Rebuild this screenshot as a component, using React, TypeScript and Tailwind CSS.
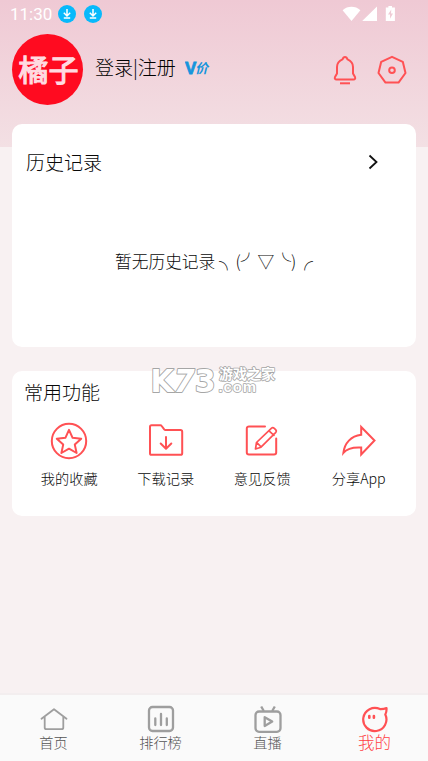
import React from 'react';

interface IconItem {
  label: string;
  icon: React.ReactNode;
}

const DownloadDot: React.FC = () => (
  <svg width="18" height="18" viewBox="0 0 18 18" fill="none">
    <circle cx="9" cy="9" r="9" fill="#08b9fb" />
    <path d="M9 4v6.5M5.8 7.8 9 11l3.2-3.2M5.8 13h6.4" stroke="#fff" strokeWidth="1.5" />
  </svg>
);

const StatusIcons: React.FC = () => (
  <svg width="54" height="16" viewBox="0 0 54 16" fill="#fff">
    <path d="M.6 4.2C5.6-.3 13.4-.3 18.4 4.2L9.5 15z" />
    <path d="M35 .5V15H20.2z" />
    <path
      fillRule="evenodd"
      d="M43.8 1.400h2.600V0h3.600v1.400h2.900V15h-9.100zM49.300 3.400l-3.300 5.200h2v4.200l3-5.400h-2z"
    />
  </svg>
);

const BellIcon: React.FC = () => (
  <svg width="24" height="30" viewBox="0 0 24 30" fill="none" stroke="#ff5154" strokeWidth="2" strokeLinejoin="round">
    <path d="M12 2c-1.300 0-2 .9-2.500 2.400C5.700 6 4 8.600 4 12v6.500L2 22c-.6 1.500 0 2.500 1.500 2.500h17c1.500 0 2.100-1 1.500-2.500l-2-3.500V12c0-3.400-1.700-6-5.500-7.600C14 2.900 13.300 2 12 2z" />
    <path d="M7 28.300h10" />
  </svg>
);

const SettingsIcon: React.FC = () => (
  <svg width="30" height="30" viewBox="0 0 30 30" fill="none" stroke="#ff5154" strokeWidth="2" strokeLinejoin="round">
    <path d="M15 1.800 25.800 6.800 28.500 18 21.500 27.600H8.500L1.500 18 4.200 6.800z" />
    <circle cx="15" cy="15.300" r="2.800" />
  </svg>
);

const features: IconItem[] = [
  {
    label: '我的收藏',
    icon: (
      <svg width="38" height="38" viewBox="0 0 38 38" fill="none" stroke="#ff5154" strokeWidth="2" strokeLinejoin="round">
        <circle cx="19" cy="19" r="17.2" />
        <path d="m19 7.800 3.600 8 8.600.9-6.400 5.900 1.800 8.400-7.600-4.300-7.600 4.300 1.800-8.400-6.400-5.900 8.600-.9z" />
      </svg>
    ),
  },
  {
    label: '下载记录',
    icon: (
      <svg width="38" height="38" viewBox="0 0 38 38" fill="none" stroke="#ff5154" strokeWidth="2" strokeLinejoin="round" strokeLinecap="round">
        <path d="M4.500 3.200h8.800c.7 0 1 .2 1.400.8l2.500 3.400c.4.500.7.700 1.300.7h15c1 0 1.700.6 1.700 1.600v21.500c0 1-.6 1.600-1.700 1.600H4.500c-1 0-1.500-.6-1.500-1.600V4.700c0-1 .5-1.500 1.500-1.500z" />
        <path d="M19 15v11.500M13.700 21.500l5.300 5.200 5.300-5.200" />
      </svg>
    ),
  },
  {
    label: '意见反馈',
    icon: (
      <svg width="38" height="38" viewBox="0 0 38 38" fill="none" stroke="#ff5154" strokeWidth="2" strokeLinejoin="round" strokeLinecap="round">
        <path d="M22 4.500H6C4.600 4.500 3.800 5.200 3.800 6.500v24c0 1.300.8 2 2.200 2h25c1.400 0 2.200-.7 2.200-2V16.500" />
        <path d="M12.500 27l1-6.500L28.300 6.300c1-.9 2-.9 3 .1l1.300 1.300c1 1 .9 2 0 3L18 25.200zM26 8.800l5 4.500M13.800 20.500l4.200 4.300" strokeWidth="1.700" />
      </svg>
    ),
  },
  {
    label: '分享App',
    icon: (
      <svg width="38" height="38" viewBox="0 0 38 38" fill="none" stroke="#ff5154" strokeWidth="2" strokeLinejoin="miter">
        <path d="M21.200 5 34.500 18.500 21.200 32.500V25.500C13 25 7.500 26 3.400 30.800 4.500 21 11 14 21.200 12.800z" />
      </svg>
    ),
  },
];

const tabs: IconItem[] = [
  {
    label: '首页',
    icon: (
      <svg width="28" height="28" viewBox="0 0 28 28" fill="none" stroke="#9e9e9e" strokeWidth="1.800" strokeLinejoin="round" strokeLinecap="round">
        <path d="M1.500 13.800 14 4.200l12.500 9.600M4.700 11.700v10.800c0 1.200.5 1.700 1.700 1.700h15.200c1.200 0 1.700-.5 1.700-1.700V11.700" />
      </svg>
    ),
  },
  {
    label: '排行榜',
    icon: (
      <svg width="28" height="28" viewBox="0 0 28 28" fill="none" stroke="#9e9e9e" strokeWidth="2.300">
        <rect x="2" y="2" width="24" height="24" rx="3.500" />
        <path d="M8.300 13.500V20M14 9V20M19.800 13.500V20" strokeLinecap="round" />
      </svg>
    ),
  },
  {
    label: '直播',
    icon: (
      <svg width="28" height="28" viewBox="0 0 28 28" fill="none" stroke="#9e9e9e" strokeWidth="2.300" strokeLinejoin="round">
        <rect x="1.500" y="6.500" width="25" height="20.300" rx="3.500" />
        <path d="m7.200 1.500 2.600 4.500M20.800 1.500 18.200 6M10.700 12.200v8.800l7.500-4.400z" />
      </svg>
    ),
  },
  {
    label: '我的',
    icon: (
      <svg width="28" height="28" viewBox="0 0 28 28" fill="none" stroke="#ff5154" strokeWidth="2.200" strokeLinejoin="round" strokeLinecap="round">
        <path d="M19 4.100A11.600 11.600 0 1 0 24.300 9.500C25.400 7.500 25.700 5.500 25.500 3c-2 .9-4 1.200-6.500 1.100z" />
        <path d="M8.300 11v1.800M12.900 11v1.800" strokeWidth="2.600" />
      </svg>
    ),
  },
];

const Watermark: React.FC = () => (
  <svg
    className="absolute left-[150px] top-[356px]"
    width="130"
    height="50"
    viewBox="0 0 130 50"
    fill="#ffffff"
    stroke="#a6a6a6"
    paintOrder="stroke"
    strokeLinejoin="round"
  >
    <text transform="translate(0.500 36) scale(1 1.080)" fontFamily="DejaVu Sans" fontWeight="700" fontSize="30" strokeWidth="1.800">
      K<tspan fontStyle="italic">7</tspan>3
    </text>
    <text x="69" y="22.500" fontFamily="Noto Sans CJK SC" fontWeight="700" fontSize="14" strokeWidth="1.600">
      游戏之家
    </text>
    <text x="68.500" y="36" fontFamily="Liberation Sans" fontWeight="700" fontSize="15" strokeWidth="1.600" textLength="37.500">
      .com
    </text>
  </svg>
);

export default function App() {
  return (
    <div className="relative flex h-[761px] w-[428px] flex-col overflow-hidden bg-[#f8f1f2] font-['Noto_Sans_CJK_SC',sans-serif] font-light text-[#080808]">
      <div className="h-[147px] shrink-0 bg-linear-to-b from-[#efc9d4] to-[#f3e0e4]">
        {/* Status bar */}
        <div className="flex h-[28px] items-center pl-[10px] pr-[32px] text-white">
          <span className="w-[48px] pt-px font-[Roboto] text-[17px] font-normal leading-none">11:30</span>
          <div className="flex gap-2">
            <DownloadDot />
            <DownloadDot />
          </div>
          <div className="ml-auto">
            <StatusIcons />
          </div>
        </div>

        {/* Account */}
        <div className="flex h-[83px] items-center pl-3 pr-[21px]">
          <div className="flex size-[71px] items-center justify-center rounded-full bg-[#ff0b20]">
            <span className="-mt-[3px] ml-[2px] text-[30px] font-normal leading-none text-[#ffdbe1] [-webkit-text-stroke:1.2px_#ffdbe1]">橘子</span>
          </div>
          <span className="ml-[12px] -mt-[6px] whitespace-nowrap text-[19px] leading-none text-black">登录|注册</span>
          <svg className="ml-[9px] -mt-[4px]" width="26" height="18" viewBox="0 0 26 18" fill="#1695dc">
            <text x="0" y="14.500" fontFamily="Liberation Sans" fontWeight="700" fontSize="17" stroke="#1695dc" strokeWidth="0.800">V</text>
            <text x="10" y="14" fontFamily="Noto Sans CJK SC" fontWeight="700" fontStyle="italic" fontSize="13">价</text>
          </svg>
          <div className="ml-auto flex items-center gap-5">
            <BellIcon />
            <SettingsIcon />
          </div>
        </div>
      </div>

      {/* History */}
      <section className="mx-3 -mt-[23px] h-[223px] shrink-0 rounded-[10px] bg-white">
        <div className="flex h-[75px] items-center justify-between pl-[14px] pr-[36px]">
          <h2 className="text-[19px] leading-[18px]">历史记录</h2>
          <svg width="14" height="18" viewBox="0 0 14 18" fill="none" stroke="#111" strokeWidth="1.800">
            <path d="m3.500 2.500 7 6.500-7 6.500" />
          </svg>
        </div>
        <p className="mt-[54px] text-center text-[16.700px] leading-[16px]">暂无历史记录 ╮(╯▽╰)╭</p>
      </section>

      {/* Common features */}
      <section className="mx-3 mt-6 h-[145px] shrink-0 rounded-[10px] bg-white pt-[11px]">
        <h2 className="pl-3 text-[19px] leading-[20px]">常用功能</h2>
        <div className="mt-5 grid grid-cols-4 px-[9px]">
          {features.map(item => (
            <div key={item.label} className="flex flex-col items-center">
              {item.icon}
              <span className="mt-[10px] whitespace-nowrap text-[14.200px] leading-[16px]">{item.label}</span>
            </div>
          ))}
        </div>
      </section>

      {/* Bottom navigation */}
      <nav className="mt-auto grid h-[68px] grid-cols-4 border-t-2 border-[#f3eeef] bg-[#fafafa] pt-[10px]">
        {tabs.map(tab => (
          <div key={tab.label} className="flex flex-col items-center">
            {tab.icon}
            <span
              className={
                tab.label === '我的'
                  ? 'mt-px text-[16.500px] leading-[16px] text-[#ff4144]'
                  : 'mt-px text-[14.200px] leading-[16px] text-[#555555]'
              }
            >
              {tab.label}
            </span>
          </div>
        ))}
      </nav>

      <Watermark />
    </div>
  );
}
